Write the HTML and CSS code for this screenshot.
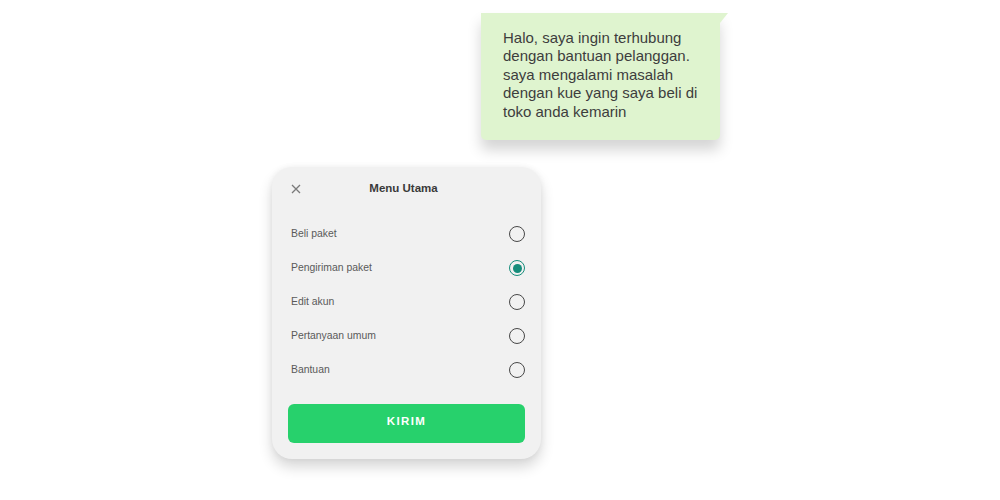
FILE: index.html
```html
<!DOCTYPE html>
<html lang="en">
<head>
    <meta charset="UTF-8">
    <meta name="viewport" content="width=device-width, initial-scale=1.0">
    <title>Menu Utama</title>
    <link rel="stylesheet" href="styles.css">
</head>
<body>

    <div class="chat-bubble">
        Halo, saya ingin terhubung dengan bantuan pelanggan. saya mengalami masalah dengan kue yang saya beli di toko anda kemarin
    </div>

    <div class="menu-card">
        <div class="menu-header">
            <button class="close-button" aria-label="Tutup">
                <svg width="10" height="10" viewBox="0 0 10 10">
                    <path d="M1 1 L9 9 M9 1 L1 9" stroke="#7a7a7a" stroke-width="1.3" fill="none"/>
                </svg>
            </button>
            <div class="menu-title">Menu Utama</div>
        </div>
        <div class="option-list">
            <label class="option-row">
                <span>Beli paket</span>
                <input type="radio" name="menu" value="beli">
            </label>
            <label class="option-row">
                <span>Pengiriman paket</span>
                <input type="radio" name="menu" value="pengiriman" checked>
            </label>
            <label class="option-row">
                <span>Edit akun</span>
                <input type="radio" name="menu" value="akun">
            </label>
            <label class="option-row">
                <span>Pertanyaan umum</span>
                <input type="radio" name="menu" value="umum">
            </label>
            <label class="option-row">
                <span>Bantuan</span>
                <input type="radio" name="menu" value="bantuan">
            </label>
        </div>
        <button class="send-button">KIRIM</button>
    </div>

</body>
</html>
```

FILE: styles.css
```css
body {
    font-family: "Liberation Sans", Arial, sans-serif;
    margin: 0;
    padding: 13px 0 0 0;
    background-color: #ffffff;
    width: 1000px;
    height: 500px;
    box-sizing: border-box;
    overflow: hidden;
}
.chat-bubble {
    position: relative;
    margin-left: 481px;
    width: 239px;
    height: 127px;
    box-sizing: border-box;
    padding: 16px 20px 0 22px;
    background: #dff4cf;
    border-radius: 0 0 5px 5px;
    font-size: 15px;
    line-height: 18.4px;
    color: #3d3d3d;
    box-shadow: 0 10px 14px rgba(0,0,0,0.17);
}
.chat-bubble::after {
    content: "";
    position: absolute;
    top: 0;
    right: -8px;
    border-top: 10px solid #dff4cf;
    border-right: 8px solid transparent;
}
.menu-card {
    margin: 27px 0 0 272px;
    width: 269px;
    height: 292px;
    box-sizing: border-box;
    padding: 12px 16px 16px;
    background: #f1f1f1;
    border-radius: 20px;
    box-shadow: 0 8px 14px rgba(0,0,0,0.16), 0 0 6px rgba(0,0,0,0.05);
}
.menu-header {
    position: relative;
    height: 20px;
    display: flex;
    align-items: center;
    justify-content: center;
}
.close-button {
    position: absolute;
    left: 3px;
    top: 5px;
    padding: 0;
    border: none;
    background: none;
    width: 10px;
    height: 10px;
    line-height: 0;
}
.menu-title {
    font-size: 11.5px;
    font-weight: bold;
    color: #3a3a3a;
    margin-left: -6px;
    margin-top: -2px;
}
.option-list {
    margin-top: 18px;
}
.option-row {
    height: 34px;
    display: flex;
    align-items: center;
    justify-content: space-between;
    padding-left: 3px;
    font-size: 10.4px;
    color: #5a5a5a;
}
.option-row span {
    margin-top: -2px;
}
.option-row input {
    appearance: none;
    margin: 0;
    width: 16px;
    height: 16px;
    border: 1.5px solid #484848;
    border-radius: 50%;
    box-sizing: border-box;
    background: transparent;
    display: grid;
    place-items: center;
}
.option-row input:checked {
    border-color: #168d7b;
}
.option-row input:checked::before {
    content: "";
    width: 9px;
    height: 9px;
    border-radius: 50%;
    background: #168d7b;
}
.send-button {
    display: block;
    width: 100%;
    height: 39px;
    margin-top: 17px;
    padding: 0 0 6px 0;
    border: none;
    border-radius: 6px;
    background: #27d16c;
    color: #ffffff;
    font-family: "Liberation Sans", Arial, sans-serif;
    font-size: 11.5px;
    font-weight: bold;
    letter-spacing: 1.4px;
}
```
